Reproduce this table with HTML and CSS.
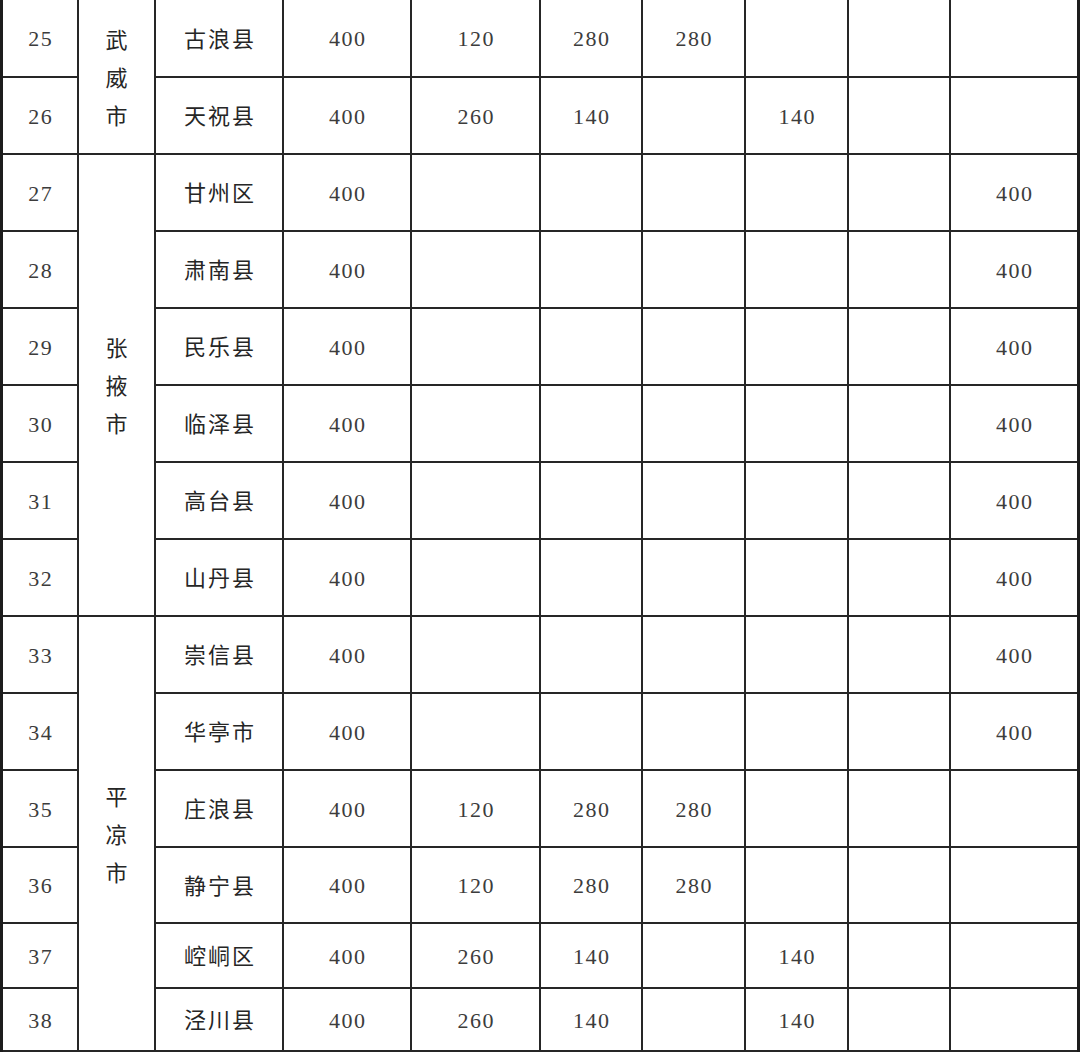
FILE: index.html
```html
<!DOCTYPE html>
<html lang="zh-CN">
<head>
<meta charset="utf-8">
<title>表</title>
<link rel="stylesheet" href="styles.css">
</head>
<body>
<div class="sheet">
  <div class="cell num">25</div><div class="cell city rows2"><span>武威市</span></div><div class="cell county">古浪县</div><div class="cell val">400</div><div class="cell val">120</div><div class="cell val">280</div><div class="cell val">280</div><div class="cell val"></div><div class="cell val"></div><div class="cell val last"></div>
  <div class="cell num">26</div><div class="cell county">天祝县</div><div class="cell val">400</div><div class="cell val">260</div><div class="cell val">140</div><div class="cell val"></div><div class="cell val">140</div><div class="cell val"></div><div class="cell val last"></div>

  <div class="cell num">27</div><div class="cell city rows6"><span>张掖市</span></div><div class="cell county">甘州区</div><div class="cell val">400</div><div class="cell val"></div><div class="cell val"></div><div class="cell val"></div><div class="cell val"></div><div class="cell val"></div><div class="cell val last">400</div>
  <div class="cell num">28</div><div class="cell county">肃南县</div><div class="cell val">400</div><div class="cell val"></div><div class="cell val"></div><div class="cell val"></div><div class="cell val"></div><div class="cell val"></div><div class="cell val last">400</div>
  <div class="cell num">29</div><div class="cell county">民乐县</div><div class="cell val">400</div><div class="cell val"></div><div class="cell val"></div><div class="cell val"></div><div class="cell val"></div><div class="cell val"></div><div class="cell val last">400</div>
  <div class="cell num">30</div><div class="cell county">临泽县</div><div class="cell val">400</div><div class="cell val"></div><div class="cell val"></div><div class="cell val"></div><div class="cell val"></div><div class="cell val"></div><div class="cell val last">400</div>
  <div class="cell num">31</div><div class="cell county">高台县</div><div class="cell val">400</div><div class="cell val"></div><div class="cell val"></div><div class="cell val"></div><div class="cell val"></div><div class="cell val"></div><div class="cell val last">400</div>
  <div class="cell num">32</div><div class="cell county">山丹县</div><div class="cell val">400</div><div class="cell val"></div><div class="cell val"></div><div class="cell val"></div><div class="cell val"></div><div class="cell val"></div><div class="cell val last">400</div>

  <div class="cell num">33</div><div class="cell city rows6"><span>平凉市</span></div><div class="cell county">崇信县</div><div class="cell val">400</div><div class="cell val"></div><div class="cell val"></div><div class="cell val"></div><div class="cell val"></div><div class="cell val"></div><div class="cell val last">400</div>
  <div class="cell num">34</div><div class="cell county">华亭市</div><div class="cell val">400</div><div class="cell val"></div><div class="cell val"></div><div class="cell val"></div><div class="cell val"></div><div class="cell val"></div><div class="cell val last">400</div>
  <div class="cell num">35</div><div class="cell county">庄浪县</div><div class="cell val">400</div><div class="cell val">120</div><div class="cell val">280</div><div class="cell val">280</div><div class="cell val"></div><div class="cell val"></div><div class="cell val last"></div>
  <div class="cell num">36</div><div class="cell county">静宁县</div><div class="cell val">400</div><div class="cell val">120</div><div class="cell val">280</div><div class="cell val">280</div><div class="cell val"></div><div class="cell val"></div><div class="cell val last"></div>
  <div class="cell num">37</div><div class="cell county">崆峒区</div><div class="cell val">400</div><div class="cell val">260</div><div class="cell val">140</div><div class="cell val"></div><div class="cell val">140</div><div class="cell val"></div><div class="cell val last"></div>
  <div class="cell num">38</div><div class="cell county">泾川县</div><div class="cell val">400</div><div class="cell val">260</div><div class="cell val">140</div><div class="cell val"></div><div class="cell val">140</div><div class="cell val"></div><div class="cell val last"></div>
</div>
</body>
</html>
```
FILE: styles.css
```css
html, body {
  margin: 0;
  padding: 0;
  background: #ffffff;
}

.sheet {
  width: 1080px;
  box-sizing: border-box;
  border-left: 3px solid #1c1c1c;
  border-right: 3px solid #1c1c1c;
  display: grid;
  grid-template-columns: 76px 77px 128px 128px 129px 102px 103px 103px 102px 126px;
  grid-template-rows: 78px repeat(10, 77px) 76px 65px 63px;
}

.cell {
  box-sizing: border-box;
  border-right: 2px solid #262626;
  border-bottom: 2px solid #262626;
  display: flex;
  align-items: center;
  justify-content: center;
}

.cell.last {
  border-right: none;
}

.num,
.val {
  font-family: "Liberation Serif", "Times New Roman", serif;
  font-size: 22px;
  letter-spacing: 1.5px;
  padding-left: 1.5px;
  padding-top: 2px;
  color: #3c3c3c;
}

.county {
  font-family: "Noto Sans CJK SC", sans-serif;
  font-size: 22px;
  letter-spacing: 2px;
  padding-left: 2px;
  padding-bottom: 3px;
  color: #262626;
}

.city {
  font-family: "Noto Sans CJK SC", sans-serif;
  font-size: 22px;
  color: #262626;
  padding-bottom: 2px;
}

.city span {
  width: 1em;
  line-height: 38px;
  text-align: center;
}

.rows2 {
  grid-row: span 2;
}

.rows6 {
  grid-row: span 6;
}
```
